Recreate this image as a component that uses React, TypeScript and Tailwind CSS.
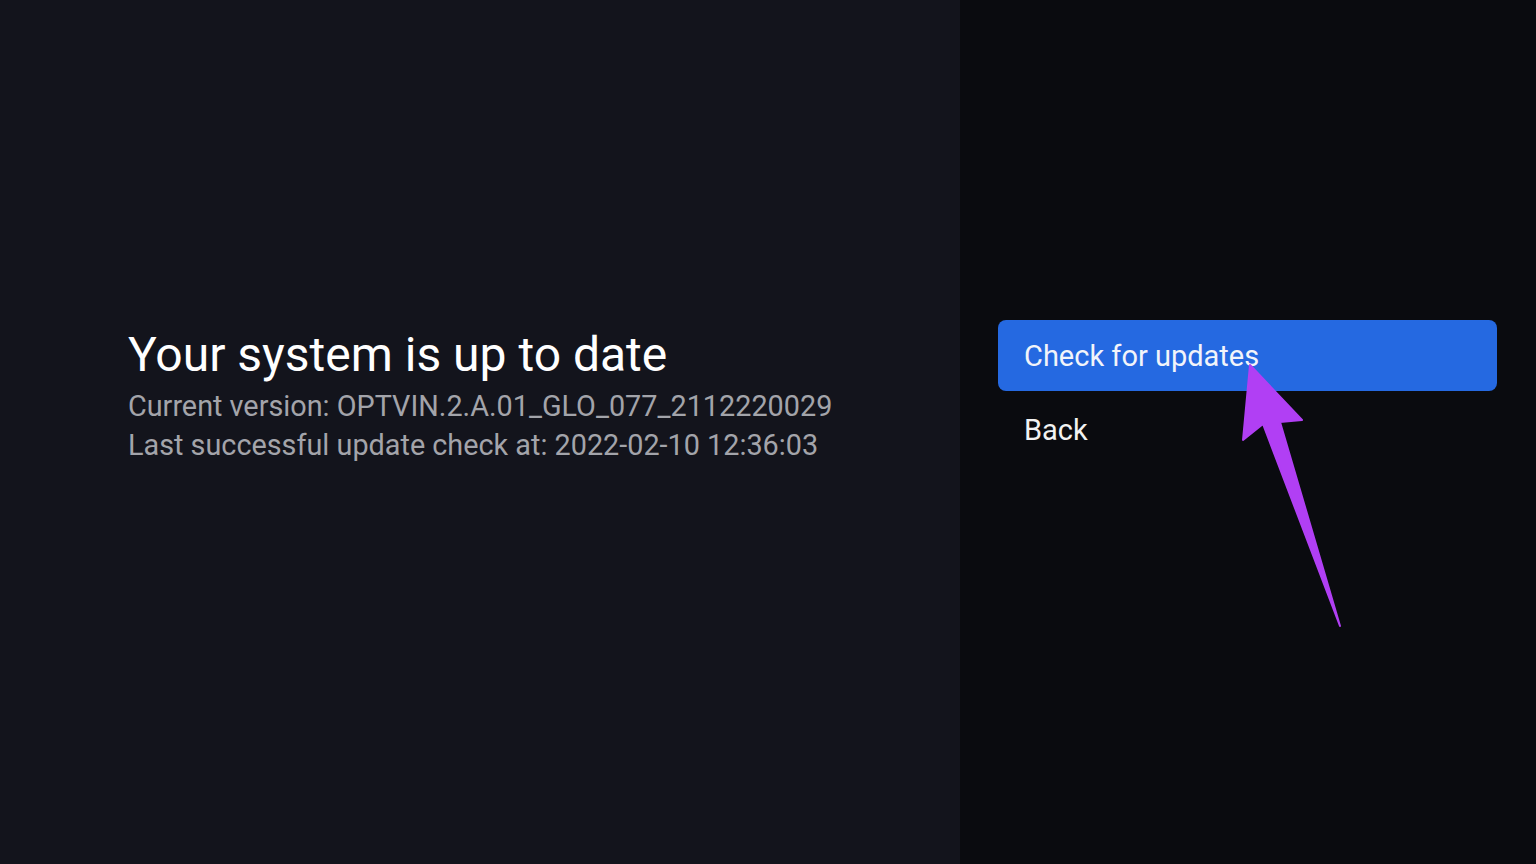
import React from 'react';

const Arrow: React.FC = () => (
  <svg
    className="absolute left-0 top-0 pointer-events-none"
    width="1536"
    height="864"
    viewBox="0 0 1536 864"
  >
    <polygon
      points="1250,365 1302,420 1280,422 1340,626 1263,424 1243,440"
      fill="#b13ff4"
      stroke="#b13ff4"
      strokeWidth="2"
      strokeLinejoin="round"
    />
  </svg>
);

const App: React.FC = () => {
  return (
    <div
      className="relative w-[1536px] h-[864px] flex overflow-hidden"
      style={{ fontFamily: 'Roboto, "Noto Sans", sans-serif' }}
    >
      {/* Info panel */}
      <section className="w-[960px] h-full bg-[#13141c] flex flex-col pt-[327px] pl-[128px]">
        <h1 className="text-[48px] leading-[56px] text-white font-normal">Your system is up to date</h1>
        <p className="mt-[4px] text-[28.8px] leading-[39px] text-[#a3a4aa]">
          Current version: OPTVIN.2.A.01_GLO_077_2112220029
        </p>
        <p className="text-[28.8px] leading-[39px] text-[#a3a4aa]">
          Last successful update check at: 2022-02-10 12:36:03
        </p>
      </section>

      {/* Actions */}
      <aside className="flex-1 h-full bg-[#0a0b0f] pt-[320px] pl-[38px] pr-[39px]">
        <button className="w-full h-[71px] rounded-[8px] bg-[#2569e1] text-left pl-[26px] pt-[3px] text-[29px] text-[#f2f4fa]">
          Check for updates
        </button>
        <button className="w-full h-[74px] text-left pl-[26px] pt-[6px] text-[29px] text-[#f2f2f2]">
          Back
        </button>
      </aside>

      <Arrow />
    </div>
  );
};

export default App;
